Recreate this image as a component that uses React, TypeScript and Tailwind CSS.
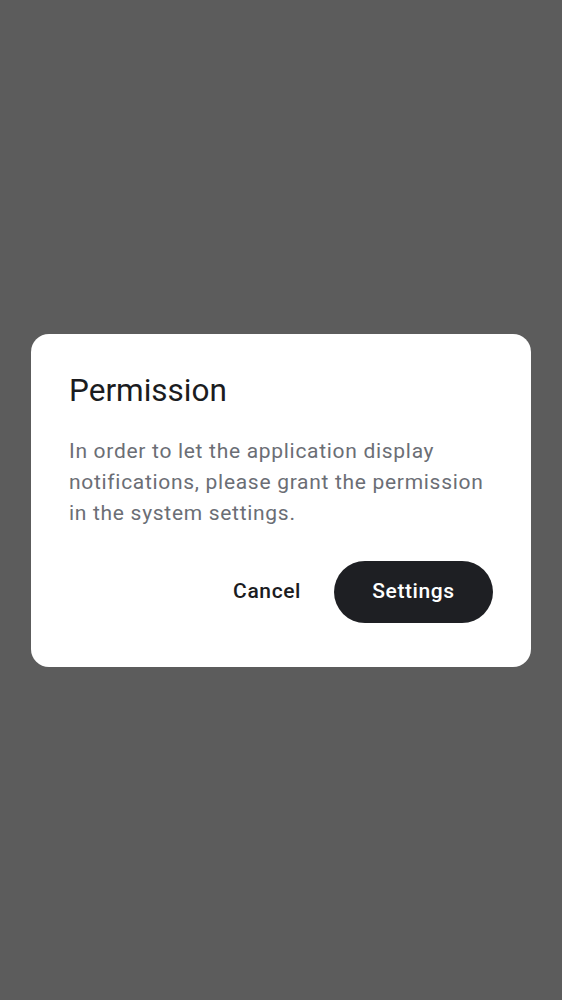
export default function App() {
  return (
    <div className="min-h-screen w-full bg-[#5c5c5c] flex items-center justify-center px-[31px] font-['Roboto',sans-serif]">
      <div className="w-full bg-white rounded-[18px] pl-[38px] pr-[38px] pt-[37px] pb-[44px]">
        <h2 className="text-[31.5px] leading-[40px] text-[#1b1c1f] font-normal">Permission</h2>
        <p className="mt-[25px] text-[21px] leading-[31px] tracking-[0.7px] text-[#6b6e75]">
          In order to let the application display notifications, please grant the permission in the system settings.
        </p>
        <div className="mt-[32px] flex items-center justify-end gap-[12px]">
          <button className="h-[62px] px-[21px] text-[21px] tracking-[0.6px] font-medium text-[#1b1c1f]">Cancel</button>
          <button className="h-[62px] w-[159px] rounded-full bg-[#1e1f23] text-[21px] tracking-[0.6px] font-medium text-white">Settings</button>
        </div>
      </div>
    </div>
  )
}
